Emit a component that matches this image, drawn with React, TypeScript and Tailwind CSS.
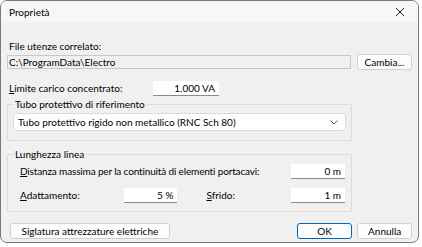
import React from 'react';

const font = { fontFamily: 'Lato, "Noto Sans", sans-serif' };

function Field({ value, className }: { value: string; className: string }) {
    return (
        <div className={`h-[15px] bg-white border-b border-[#8a8a8a] text-right pr-[4px] leading-[14px] text-black ${className}`}>
            {value}
        </div>
    );
}

function Button({ children, className, primary }: { children: React.ReactNode; className: string; primary?: boolean }) {
    return (
        <div
            className={`h-[16px] rounded-[3px] bg-[#fdfdfd] flex items-center justify-center text-black whitespace-nowrap ${primary ? 'border border-[#0067c0]' : 'border border-[#d0d0d0]'} ${className}`}
        >
            {children}
        </div>
    );
}

function Group({ title, children, className }: { title: string; children: React.ReactNode; className: string }) {
    return (
        <div className={`relative border border-[#dcdcdc] rounded-[2px] ${className}`}>
            <span className="absolute left-[6px] top-[-8px] bg-[#f0f0f0] px-[1px] leading-[14px]">{title}</span>
            {children}
        </div>
    );
}

export default function App() {
    return (
        <div className="w-[422px] h-[247px] bg-white" style={font}>
            <div className="w-[419px] h-[243px] border border-[#7a7a7a] rounded-[7px] overflow-hidden bg-[#f0f0f0] flex flex-col text-[10px] text-black whitespace-nowrap">
                <div className="h-[22px] bg-[#f7f7f7] flex items-center justify-between pl-[8px] pr-[13px] shrink-0">
                    <span>Proprietà</span>
                    <svg width="10" height="10" viewBox="0 0 10 10">
                        <path d="M1 1L9 9M9 1L1 9" stroke="#222" strokeWidth="1" />
                    </svg>
                </div>
                <div className="flex flex-col px-[6px] pt-[17px]">
                    <div className="pl-[2px] leading-[13px]">File utenze correlato:</div>
                    <div className="flex items-center gap-[6px] mt-[1px]">
                        <div className="w-[344px] h-[14px] border border-[#c8c8c8] bg-[#f0f0f0] pl-[1px] leading-[12px]">C:\ProgramData\Electro</div>
                        <Button className="w-[55px]">Cambia...</Button>
                    </div>
                    <div className="flex items-center mt-[11px] pl-[2px]">
                        <span className="w-[144px]"><u>L</u>imite carico concentrato:</span>
                        <Field value="1.000 VA" className="w-[66px]" />
                    </div>
                    <Group title="Tubo protettivo di riferimento" className="mt-[8px] w-[345px] h-[37px] px-[5px] pt-[8px]">
                        <div className="h-[18px] bg-white border border-[#dadada] rounded-[3px] flex items-center justify-between pl-[4px] pr-[7px]">
                            <span>Tubo protettivo rigido non metallico (RNC Sch 80)</span>
                            <svg width="8" height="5" viewBox="0 0 8 5">
                                <path d="M0.5 0.5L4 4L7.5 0.5" stroke="#555" strokeWidth="1" fill="none" />
                            </svg>
                        </div>
                    </Group>
                    <Group title="Lunghezza linea" className="mt-[13px] w-[345px] h-[58px] pl-[12px] pr-[6px] pt-[9px]">
                        <div className="flex items-center justify-between">
                            <span className="tracking-[-0.15px]"><u>D</u>istanza massima per la continuità di elementi portacavi:</span>
                            <Field value="0 m" className="w-[54px]" />
                        </div>
                        <div className="flex items-center mt-[9px]">
                            <span className="w-[104px]"><u>A</u>dattamento:</span>
                            <Field value="5 %" className="w-[54px]" />
                            <span className="ml-[29px] w-[85px]"><u>S</u>frido:</span>
                            <Field value="1 m" className="w-[54px]" />
                        </div>
                    </Group>
                    <div className="flex items-center mt-[11px] pl-[3px]">
                        <Button className="w-[161px]">Siglatura attrezzature elettriche</Button>
                        <Button className="w-[56px] ml-[127px]" primary>OK</Button>
                        <Button className="w-[55px] ml-[5px]">Annulla</Button>
                    </div>
                </div>
            </div>
        </div>
    );
}
